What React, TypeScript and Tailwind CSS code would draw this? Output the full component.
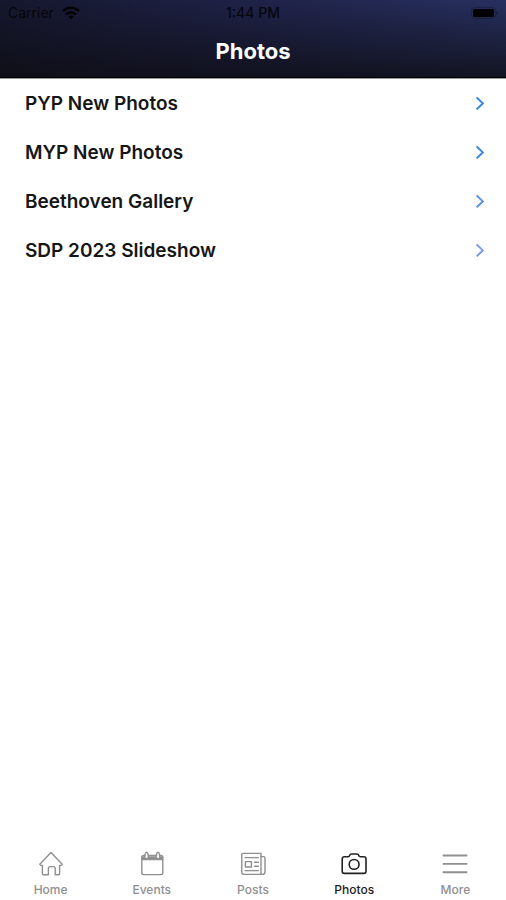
import { useState } from "react";
import type { ReactNode } from "react";

const galleries = [
  { title: "PYP New Photos", color: "text-[#2f86ea]" },
  { title: "MYP New Photos", color: "text-[#3585ea]" },
  { title: "Beethoven Gallery", color: "text-[#5590f0]" },
  { title: "SDP 2023 Slideshow", color: "text-[#7799f2]" },
];

function TabIcon({ children }: { children: ReactNode }) {
  return (
    <svg
      width="28"
      height="28"
      viewBox="0 0 28 28"
      fill="none"
      stroke="currentColor"
      strokeWidth="1.4"
      strokeLinejoin="round"
      strokeLinecap="round"
      aria-hidden="true"
    >
      {children}
    </svg>
  );
}

const tabs = [
  {
    label: "Home",
    icon: (
      <TabIcon>
        <path d="M2.8 14.2 14 2.4l11.2 11.8-1.2 1.2h-1.4v8.4q0 1-1 1h-3.4v-6.4q0-1.8-1.8-1.8h-3.2q-1.8 0-1.8 1.8v6.4H6.6q-1.2 0-1.2-1v-8.4H4z" />
      </TabIcon>
    ),
  },
  {
    label: "Events",
    icon: (
      <TabIcon>
        <rect x="3.8" y="5.4" width="21" height="19.2" rx="1.8" />
        <path d="M4 9.6h20.6" />
        <path d="M4.6 7.6h19.4" strokeWidth="2.6" />
        <path
          d="M6.6 8.4l.6-4.2q.4-2 1.4-2t1.4 2l.6 4.2zM18 8.4l.6-4.2q.4-2 1.4-2t1.4 2l.6 4.2z"
          fill="white"
        />
      </TabIcon>
    ),
  },
  {
    label: "Posts",
    icon: (
      <TabIcon>
        <path d="M4 3.4h18v21H5.2q-2.4 0-2.4-2.4V4.6q0-1.2 1.2-1.2z" />
        <path d="M22 6.6h2.6q1.4 0 1.4 1.4v14q0 2.4-2.4 2.4H21" />
        <path d="M6 7.6h13.4M15.4 12.2h4M15.4 16.2h4M6 20.6h13.4" />
        <rect x="6.4" y="11.6" width="6" height="5.4" />
      </TabIcon>
    ),
  },
  {
    label: "Photos",
    icon: (
      <TabIcon>
        <path
          d="M4.4 6.8h3.8q1 0 1.4-1.2.5-1.6 2-1.6h5.2q1.5 0 2 1.6.4 1.2 1.4 1.2h3.6q2.2 0 2.2 2.2v12.2q0 2.2-2.2 2.2H4.4q-2.2 0-2.2-2.2V9q0-2.2 2.2-2.2z"
          strokeWidth="1.6"
        />
        <circle cx="14.1" cy="14.4" r="4.9" strokeWidth="1.6" />
      </TabIcon>
    ),
  },
  {
    label: "More",
    icon: (
      <TabIcon>
        <path d="M2.5 5.5h23M2.5 13.9h23M2.5 22.2h23" strokeWidth="1.9" />
      </TabIcon>
    ),
  },
];

function StatusBar() {
  return (
    <div className="grid h-[26px] grid-cols-3 items-center px-2 font-[Inter,sans-serif] text-sm text-black/80">
      <div className="flex items-center gap-2">
        <span>Carrier</span>
        <svg width="18" height="14" viewBox="0 0 18 14" fill="none" stroke="black" strokeWidth="2.3" aria-hidden="true">
          <path d="M1 5.2q8-7.2 16 0M4 8.4q5-4.4 10 0" />
          <path d="M6.4 10.6q2.6-2.2 5.2 0L9 13.2z" fill="black" stroke="none" />
        </svg>
      </div>
      <span className="text-center font-medium">1:44 PM</span>
      <svg width="27" height="12" viewBox="0 0 27 12" className="justify-self-end" aria-hidden="true">
        <rect x="0.5" y="0.5" width="24" height="11" rx="3" fill="none" stroke="black" opacity="0.2" />
        <rect x="2" y="2" width="21" height="8" rx="1.5" fill="black" />
        <path d="M25.4 4v4q1.2-.6 1.2-2t-1.2-2z" fill="black" opacity="0.4" />
      </svg>
    </div>
  );
}

export default function App() {
  const [active, setActive] = useState("Photos");

  return (
    <div className="flex min-h-screen flex-col bg-white font-[Inter,sans-serif]">
      <header className="border-b border-[#9a9a9a] bg-[linear-gradient(to_bottom,transparent,rgba(13,13,18,0.8)),linear-gradient(to_right,#15172e,#1f2248_50%,#273060)]">
        <StatusBar />
        <h1 className="pt-[10px] pb-[11px] text-center text-[22px] leading-[30px] font-bold text-white">Photos</h1>
        <div className="h-px bg-black" />
      </header>

      <main className="flex-1">
        <ul>
          {galleries.map((g) => (
            <li key={g.title}>
              <button type="button" className="flex h-[49px] w-full items-center justify-between pr-5 pl-[25px] text-left">
                <span className="text-[19px] leading-6 font-semibold text-[#161616]">{g.title}</span>
                <svg
                  width="12"
                  height="16"
                  viewBox="0 0 12 16"
                  fill="none"
                  stroke="currentColor"
                  strokeWidth="2"
                  className={g.color}
                  aria-hidden="true"
                >
                  <path d="M2.6 1.4l6.2 6-6.2 6" />
                </svg>
              </button>
            </li>
          ))}
        </ul>
      </main>

      <nav className="grid grid-cols-5 pb-[2px]">
        {tabs.map((t) => (
          <button
            key={t.label}
            type="button"
            onClick={() => setActive(t.label)}
            aria-current={active === t.label ? "page" : undefined}
            className={`flex flex-col items-center gap-1 ${active === t.label ? "text-[#222222]" : "text-[#8f8f8f]"}`}
          >
            {t.icon}
            <span className="text-xs leading-4 font-medium">{t.label}</span>
          </button>
        ))}
      </nav>
    </div>
  );
}
